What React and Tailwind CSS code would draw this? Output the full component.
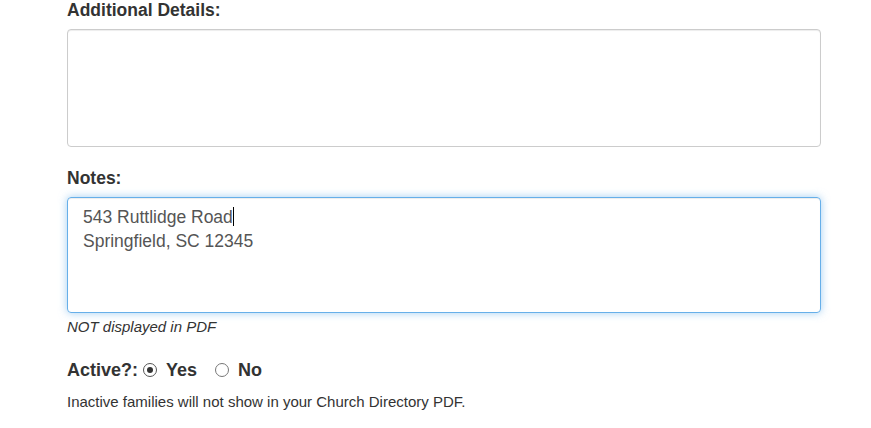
import React from 'react';

export default function App() {
  return (
    <div className="bg-white min-h-screen pl-[67px] pr-[50px] text-[#333]" style={{ fontFamily: '"Liberation Sans", Arial, sans-serif' }}>
      <div>
        <label className="block text-[17.5px] font-bold leading-[20px] mb-[9px]">Additional Details:</label>
        <textarea className="block w-full h-[118px] rounded-[4px] border border-[#ccc] px-[15px] py-[8px] text-[17.5px] leading-[24px] text-[#555] shadow-[inset_0_1px_1px_rgba(0,0,0,0.075)] resize-none outline-none" />
      </div>

      <div className="mt-[21px]">
        <label className="block text-[17.5px] font-bold leading-[20px] mb-[9px]">Notes:</label>
        <div className="relative">
          <textarea
            className="block w-full h-[116px] rounded-[4px] border border-[#66afe9] px-[15px] py-[7px] text-[17.5px] leading-[24px] text-[#555] shadow-[inset_0_1px_1px_rgba(0,0,0,0.075),0_0_8px_rgba(102,175,233,0.6)] resize-none outline-none"
            defaultValue={'543 Ruttlidge Road\nSpringfield, SC 12345'}
          />
          {/* text caret */}
          <span className="absolute left-[166px] top-[10px] w-[1px] h-[19px] bg-black" />
        </div>
        <p className="italic text-[15px] leading-[20px] mt-[4px]">NOT displayed in PDF</p>
      </div>

      <div className="mt-[21px] flex items-center text-[18px] font-bold leading-[24px]">
        <span>Active?:</span>
        <span className="ml-[5px] w-[14px] h-[14px] rounded-full border border-[#555] flex items-center justify-center">
          <span className="w-[6px] h-[6px] rounded-full bg-[#333]" />
        </span>
        <span className="ml-[9px]">Yes</span>
        <span className="ml-[18px] w-[14px] h-[14px] rounded-full border border-[#777]" />
        <span className="ml-[9px]">No</span>
      </div>

      <p className="text-[15px] leading-[20px] mt-[10px]">Inactive families will not show in your Church Directory PDF.</p>
    </div>
  );
}
